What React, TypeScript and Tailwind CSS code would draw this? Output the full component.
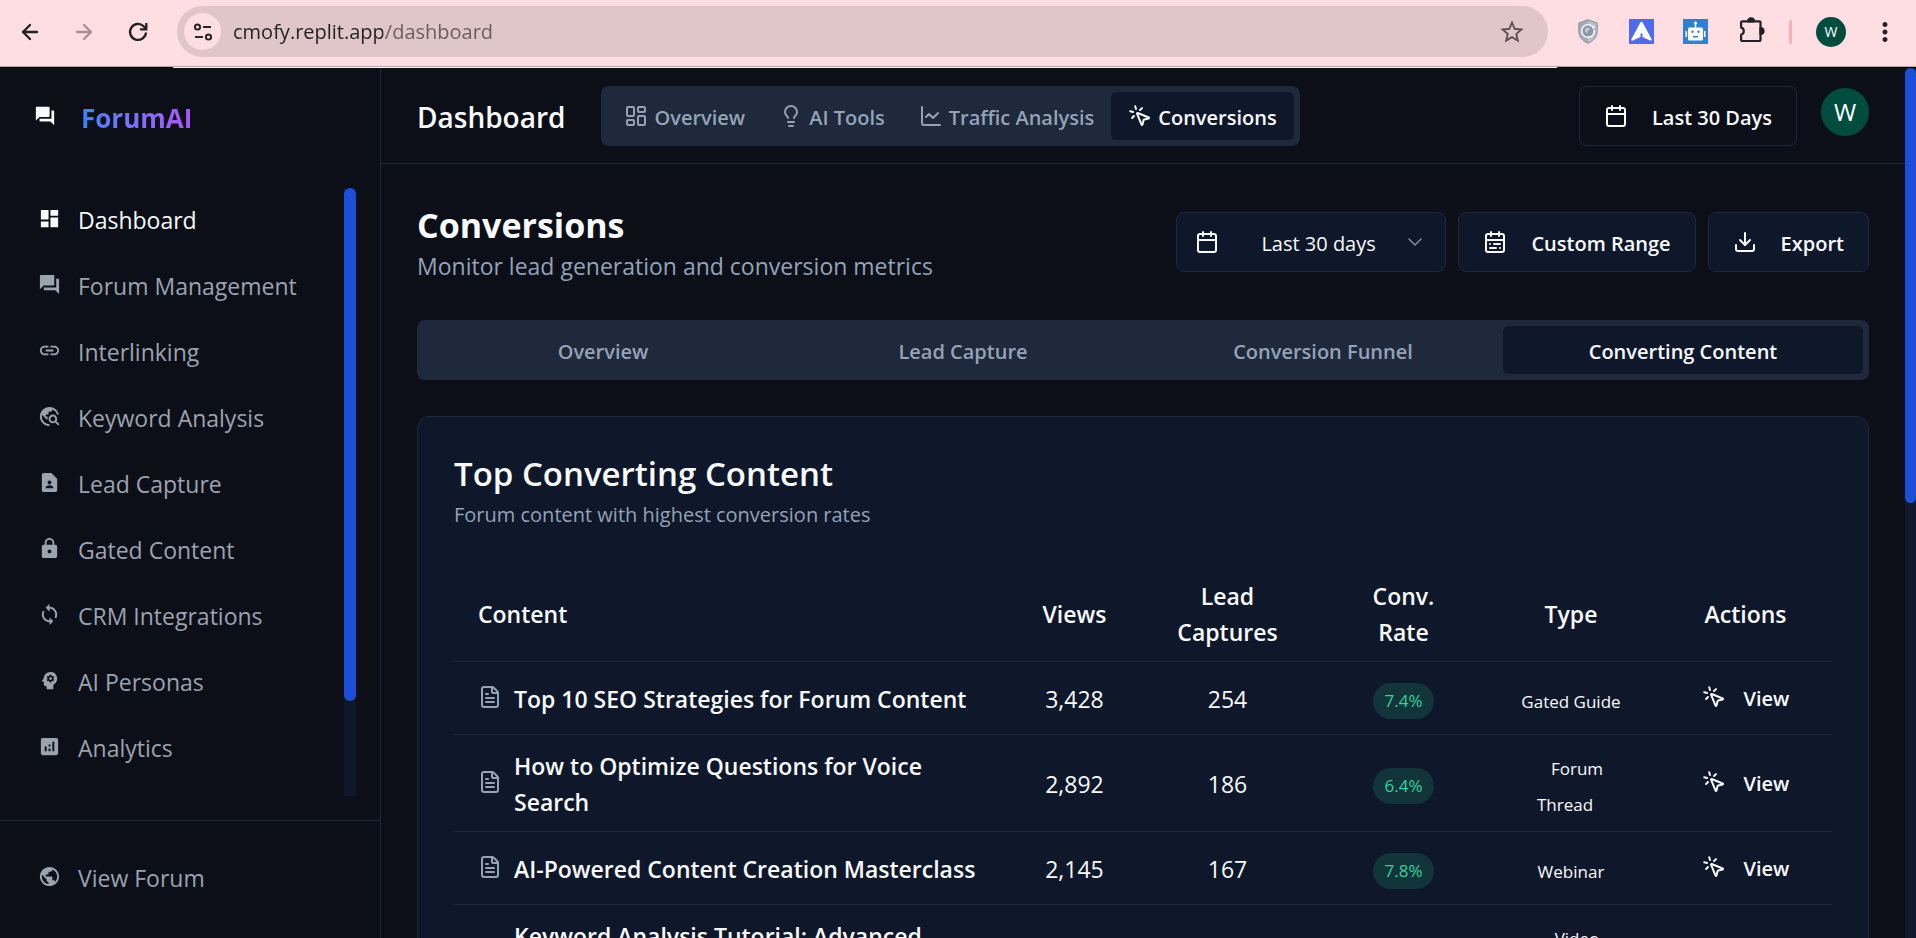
import React from "react";
import {
  ArrowLeft,
  ArrowRight,
  Calendar,
  ChartLine,
  ChevronDown,
  Download,
  FileText,
  LayoutDashboard,
  Lightbulb,
  MousePointerClick,
} from "lucide-react";
import {
  MdAnalytics,
  MdContactPage,
  MdDashboard,
  MdForum,
  MdLink,
  MdLock,
  MdMoreVert,
  MdPsychology,
  MdPublic,
  MdRefresh,
  MdStarBorder,
  MdSync,
  MdTravelExplore,
} from "react-icons/md";

const sidebarItems = [
  { label: "Dashboard", icon: MdDashboard, active: true },
  { label: "Forum Management", icon: MdForum },
  { label: "Interlinking", icon: MdLink },
  { label: "Keyword Analysis", icon: MdTravelExplore },
  { label: "Lead Capture", icon: MdContactPage },
  { label: "Gated Content", icon: MdLock },
  { label: "CRM Integrations", icon: MdSync },
  { label: "AI Personas", icon: MdPsychology },
  { label: "Analytics", icon: MdAnalytics },
];

const headerTabs = [
  { label: "Overview", icon: LayoutDashboard },
  { label: "AI Tools", icon: Lightbulb },
  { label: "Traffic Analysis", icon: ChartLine },
  { label: "Conversions", icon: MousePointerClick, active: true },
];

const sectionTabs = ["Overview", "Lead Capture", "Conversion Funnel", "Converting Content"];

const rows = [
  { title: "Top 10 SEO Strategies for Forum Content", views: "3,428", leads: "254", rate: "7.4%", type: ["Gated Guide"] },
  { title: "How to Optimize Questions for Voice Search", views: "2,892", leads: "186", rate: "6.4%", type: ["Forum", "Thread"] },
  { title: "AI-Powered Content Creation Masterclass", views: "2,145", leads: "167", rate: "7.8%", type: ["Webinar"] },
  { title: "Keyword Analysis Tutorial: Advanced Techniques", views: "1,987", leads: "142", rate: "7.1%", type: ["Video", "Tutorial"] },
];

function SiteInfoIcon() {
  return (
    <svg width="20" height="20" viewBox="0 0 20 20" fill="none" stroke="#27272a" strokeWidth="2" aria-hidden="true">
      <circle cx="4.5" cy="5" r="2.6" />
      <path d="M10 5h8M2 15h8" />
      <circle cx="15.5" cy="15" r="2.6" />
    </svg>
  );
}

function ReloadIcon() {
  return (
    <svg width="24" height="24" viewBox="0 0 24 24" fill="none" stroke="#202124" strokeWidth="2.300" aria-hidden="true">
      <path d="M20 12.500a8 8 0 1 1-2.400-6.300l2.400 2.400" />
      <path d="M20.300 3v6.300H14" />
    </svg>
  );
}

function ShieldIcon() {
  return (
    <svg width="24" height="25" viewBox="-2 0 24 25" aria-hidden="true">
      <path d="M10 .7 19.2 4v8c0 6-4 10.300-9.200 12.300C4.800 22.300.8 18 .8 12V4Z" fill="#a3abb8" stroke="#8b93a1" />
      <path d="M10 1.500 18.300 4.600v7.600c0 5.300-3.500 9.300-8.300 11.200Z" fill="#b9c0ca" />
      <circle cx="10" cy="12" r="5.200" fill="#8d96a5" />
      <path d="M14 7A6.400 6.400 0 1 0 16.300 11" stroke="#eef1f5" strokeWidth="1.600" fill="none" />
      <path d="M7 9.500l3-1 2 2-2 1.500-1 2.500-2-2Z" fill="#c3cad3" />
      <circle cx="15.300" cy="8" r="1.500" fill="#eef1f5" />
    </svg>
  );
}

function CompassIcon() {
  return (
    <svg width="25" height="25" viewBox="0 0 25 25" aria-hidden="true">
      <rect width="25" height="25" fill="#4f6bed" />
      <path d="M12.500 2.800c.6 0 1 .3 1.300.9l8.700 16.200c.6 1.200-.2 2-1.400 1.600l-7.600-3.500v-3.500h-2v3.500l-7.600 3.500c-1.200.4-2-.4-1.400-1.600l8.700-16.200c.3-.6.700-.9 1.300-.9Z" fill="#fff" />
    </svg>
  );
}

function RobotIcon() {
  return (
    <svg width="25" height="25" viewBox="0 0 25 25" aria-hidden="true">
      <rect width="25" height="25" fill="#2f80d0" />
      <path d="M12.500 4v5" stroke="#fff" strokeWidth="1.500" />
      <circle cx="12.500" cy="4" r="1.600" fill="#fff" />
      <rect x="5" y="8.500" width="15" height="13" rx="1.500" fill="#fff" />
      <rect x="2.500" y="12" width="1.600" height="6" fill="#fff" />
      <rect x="20.900" y="12" width="1.600" height="6" fill="#fff" />
      <circle cx="9.500" cy="12.800" r="1.200" fill="#2f80d0" />
      <circle cx="15.500" cy="12.800" r="1.200" fill="#2f80d0" />
      <path d="M10 17.700h5" stroke="#2f80d0" strokeWidth="1.500" />
    </svg>
  );
}

function PuzzleIcon() {
  return (
    <svg width="26" height="26" viewBox="0 0 26 26" fill="none" stroke="#202124" strokeWidth="2.200" strokeLinejoin="round" aria-hidden="true">
      <path d="M4 4.300H20.300a1.200 1.200 0 0 1 1.200 1.200V22.800a1.200 1.200 0 0 1-1.200 1.200H3.300a1.200 1.200 0 0 1-1.200-1.200V17.800a3.900 3.900 0 0 0 0-7.400V5.500a1.200 1.200 0 0 1 1.200-1.200Z" />
      <path d="M9 4.300a3 3 0 0 1 6 0ZM21.500 11a3 3 0 0 1 0 6Z" fill="#202124" />
    </svg>
  );
}

function CalendarRangeIcon() {
  return (
    <svg width="24" height="24" viewBox="0 0 24 24" fill="none" stroke="currentColor" strokeWidth="2" strokeLinecap="round" strokeLinejoin="round" aria-hidden="true">
      <rect x="3" y="4" width="18" height="18" rx="2" />
      <path d="M16 2v4M8 2v4M3 10h18M7 14h.01M11 14h6M7 18h6M17 18h.01" />
    </svg>
  );
}

function BrowserBar() {
  return (
    <div className="shrink-0">
      <div className="flex h-[66px] items-center bg-[#ffdee3] pr-4 pb-[3px] pl-[18px] text-[#202124]">
        <div className="flex items-center gap-[30px] pr-[27px]">
          <button aria-label="Back"><ArrowLeft size={24} strokeWidth={2.3} /></button>
          <button aria-label="Forward"><ArrowRight size={24} strokeWidth={2.3} className="text-[#a98f94]" /></button>
          <button aria-label="Reload"><ReloadIcon /></button>
        </div>
        <div className="flex h-[51px] flex-1 items-center rounded-full bg-[#e0c5c9] pr-[22px] pl-[7px]">
          <button aria-label="Site information" className="mr-3 flex size-[37px] items-center justify-center rounded-full bg-[#ffdee3]">
            <SiteInfoIcon />
          </button>
          <input
            aria-label="Address"
            defaultValue="cmofy.replit.app/dashboard"
            className="min-w-0 flex-1 bg-[linear-gradient(90deg,#202124_150px,#6b5a5e_150px)] bg-clip-text text-[20px] text-transparent outline-none"
          />
          <button aria-label="Bookmark"><MdStarBorder size={28} className="text-[#5c5053]" /></button>
        </div>
        <div className="flex items-center gap-[29px] pl-[28px]">
          <button aria-label="Shield extension"><ShieldIcon /></button>
          <button aria-label="Compass extension"><CompassIcon /></button>
          <button aria-label="Robot extension"><RobotIcon /></button>
          <button aria-label="Extensions" className="pb-1 pl-0.5"><PuzzleIcon /></button>
        </div>
        <div className="mx-6 h-6 w-[3px] rounded-full bg-[#ffabb8]" />
        <button aria-label="Profile" className="flex size-[30px] items-center justify-center rounded-full bg-[#004d40] text-[14px] text-white">W</button>
        <button aria-label="Menu" className="ml-6"><MdMoreVert size={30} /></button>
      </div>
      <div className="h-px bg-[#b9a3a7]" />
      <div className="flex h-px">
        <div className="w-[173px] bg-black" />
        <div className="flex-1 bg-white" />
        <div className="w-[359px] bg-black" />
      </div>
    </div>
  );
}

function Sidebar() {
  return (
    <aside className="flex w-[381px] shrink-0 flex-col border-r border-[#1e293b]">
      <a href="#home" className="flex h-[100px] shrink-0 items-center gap-[25px] pl-[34px]">
        <MdForum size={22} className="mb-1 text-slate-50" />
        <span className="bg-gradient-to-r from-[#3b82f6] to-[#a855f7] bg-clip-text text-[26px] font-bold text-transparent">ForumAI</span>
      </a>
      <div className="mt-5 mb-6 flex min-h-0 flex-1 pr-6">
        <nav className="min-w-0 flex-1 overflow-hidden">
          {sidebarItems.map(({ label, icon: Icon, active }) => (
            <a
              key={label}
              href="#section"
              className={`flex h-[66px] items-center gap-[17px] pb-0.5 pl-[38px] text-[23px] ${active ? "text-slate-50" : "text-[#9ca3af]"}`}
            >
              <span className="pb-1"><Icon size={23} /></span>
              {label}
            </a>
          ))}
        </nav>
        <div className="w-3 bg-[#0f172a]" aria-hidden="true">
          <div className="h-27/32 rounded-full bg-[#1d4ed8]" />
        </div>
      </div>
      <div className="flex h-[118px] shrink-0 items-center border-t border-[#1e293b] pb-0.5">
        <a href="#forum" className="flex items-center gap-[17px] pl-[38px] text-[23px] text-[#9ca3af]">
          <span className="pb-1"><MdPublic size={23} /></span>
          View Forum
        </a>
      </div>
    </aside>
  );
}

function Header() {
  return (
    <header className="flex h-24 shrink-0 items-center border-b border-[#1e293b] px-9">
      <h1 className="mr-9 pt-0.5 text-[28px] font-semibold text-slate-50">Dashboard</h1>
      <nav className="flex h-[60px] items-center rounded-lg bg-[#1e293b] px-1.5">
        {headerTabs.map(({ label, icon: Icon, active }) => (
          <button
            key={label}
            className={`flex h-12 items-center gap-1.5 rounded-md px-[17px] text-[20px] font-semibold ${active ? "bg-[#0f172a] text-slate-50" : "text-[#94a3b8]"}`}
          >
            <Icon size={24} />
            <span className="pt-1">{label}</span>
          </button>
        ))}
      </nav>
      <div className="ml-auto flex items-start gap-6">
        <button className="flex h-[60px] items-center gap-6 rounded-lg border border-[#1e293b] px-6 text-[20px] font-semibold text-slate-50">
          <Calendar size={24} />
          <span className="pt-1">Last 30 Days</span>
        </button>
        <button aria-label="Account" className="mt-0.5 flex size-12 items-center justify-center rounded-full bg-[#004d40] text-[24px] text-white">W</button>
      </div>
    </header>
  );
}

function PageHeading() {
  return (
    <div className="flex items-center justify-between">
      <div className="pt-1">
        <h2 className="text-[34px] leading-[42px] font-bold text-slate-50">Conversions</h2>
        <p className="pt-0.5 text-[23px] leading-9 text-[#94a3b8]">Monitor lead generation and conversion metrics</p>
      </div>
      <div className="flex gap-3 text-[20px] text-slate-50">
        <label className="flex h-[60px] w-[270px] items-center rounded-lg border border-[#1e293b] bg-[#0f172a] px-[18px]">
          <Calendar size={24} className="mr-[42px] shrink-0" />
          <select aria-label="Date range" className="min-w-0 flex-1 appearance-none bg-transparent pt-1 outline-none">
            <option>Last 30 days</option>
          </select>
          <ChevronDown size={24} className="shrink-0 text-[#858b96]" strokeWidth={1.5} />
        </label>
        <button className="flex h-[60px] items-center gap-6 rounded-lg border border-[#1e293b] bg-[#0f172a] px-6 font-semibold">
          <CalendarRangeIcon />
          <span className="pt-1">Custom Range</span>
        </button>
        <button className="flex h-[60px] items-center gap-6 rounded-lg border border-[#1e293b] bg-[#0f172a] px-6 font-semibold">
          <Download size={24} />
          <span className="pt-1">Export</span>
        </button>
      </div>
    </div>
  );
}

function ContentTable() {
  return (
    <table className="w-full table-fixed text-[23px] leading-9 text-slate-50">
      <colgroup>
        <col />
        <col className="w-[113px]" />
        <col className="w-[193px]" />
        <col className="w-[159px]" />
        <col className="w-[176px]" />
        <col className="w-[173px]" />
      </colgroup>
      <thead>
        <tr className="border-b border-[#1e293b]">
          <th className="pt-[13px] pb-[11px] pl-6 text-left font-semibold">Content</th>
          <th className="pt-[13px] pb-[11px] font-semibold">Views</th>
          <th className="px-9 pt-[13px] pb-[11px] font-semibold">Lead Captures</th>
          <th className="px-9 pt-[13px] pb-[11px] font-semibold">Conv. Rate</th>
          <th className="pt-[13px] pb-[11px] font-semibold">Type</th>
          <th className="pt-[13px] pb-[11px] font-semibold">Actions</th>
        </tr>
      </thead>
      <tbody>
        {rows.map((row) => (
          <tr key={row.title} className="h-[73px] border-b border-[#1e293b] text-center">
            <td className="pt-[13px] pr-9 pb-[11px] pl-6 text-left font-semibold">
              <div className="flex items-center gap-3">
                <FileText size={24} className="mb-1 shrink-0 text-[#94a3b8]" />
                {row.title}
              </div>
            </td>
            <td className="pt-0.5">{row.views}</td>
            <td className="pt-0.5">{row.leads}</td>
            <td className="pt-0.5">
              <span className="mt-0.5 inline-flex h-9 items-center rounded-full bg-[#12343b] px-3 text-[17px] text-[#34d399]">{row.rate}</span>
            </td>
            <td className="pt-2 text-[17px]">
              {row.type.map((line, i) => (
                <div key={line} className={row.type.length > 1 ? (i === 0 ? "pl-3" : "pr-3") : ""}>{line}</div>
              ))}
            </td>
            <td className="pt-0.5">
              <button className="inline-flex items-center gap-[18px] text-[20px] font-semibold">
                <MousePointerClick size={24} className="mb-1" />
                View
              </button>
            </td>
          </tr>
        ))}
      </tbody>
    </table>
  );
}

export default function App() {
  return (
    <div className="flex h-screen flex-col overflow-hidden bg-[#0c0e18] font-['Open_Sans',sans-serif]">
      <BrowserBar />
      <div className="flex min-h-0 flex-1">
        <Sidebar />
        <div className="flex min-w-0 flex-1 flex-col">
          <Header />
          <main className="min-h-0 flex-1 overflow-hidden px-9 pt-9">
            <PageHeading />
            <div className="mt-9 flex h-[60px] items-center rounded-lg bg-[#1e293b] px-1.5">
              {sectionTabs.map((label) => (
                <button
                  key={label}
                  className={`h-12 flex-1 rounded-md pt-1 text-[20px] font-semibold ${label === "Converting Content" ? "bg-[#0f172a] text-slate-50" : "text-[#94a3b8]"}`}
                >
                  {label}
                </button>
              ))}
            </div>
            <section className="mt-9 rounded-xl border border-[#1e293b] bg-[#0f172a] p-9">
              <h3 className="text-[33px] leading-[42px] font-semibold text-slate-50">Top Converting Content</h3>
              <p className="mt-0.5 mb-8 text-[20px] leading-9 text-[#94a3b8]">Forum content with highest conversion rates</p>
              <ContentTable />
            </section>
          </main>
        </div>
        <div className="w-[11px] shrink-0 bg-[#0f172a]" aria-hidden="true">
          <div className="h-1/2 rounded-full bg-[#1d4ed8]" />
        </div>
      </div>
    </div>
  );
}
